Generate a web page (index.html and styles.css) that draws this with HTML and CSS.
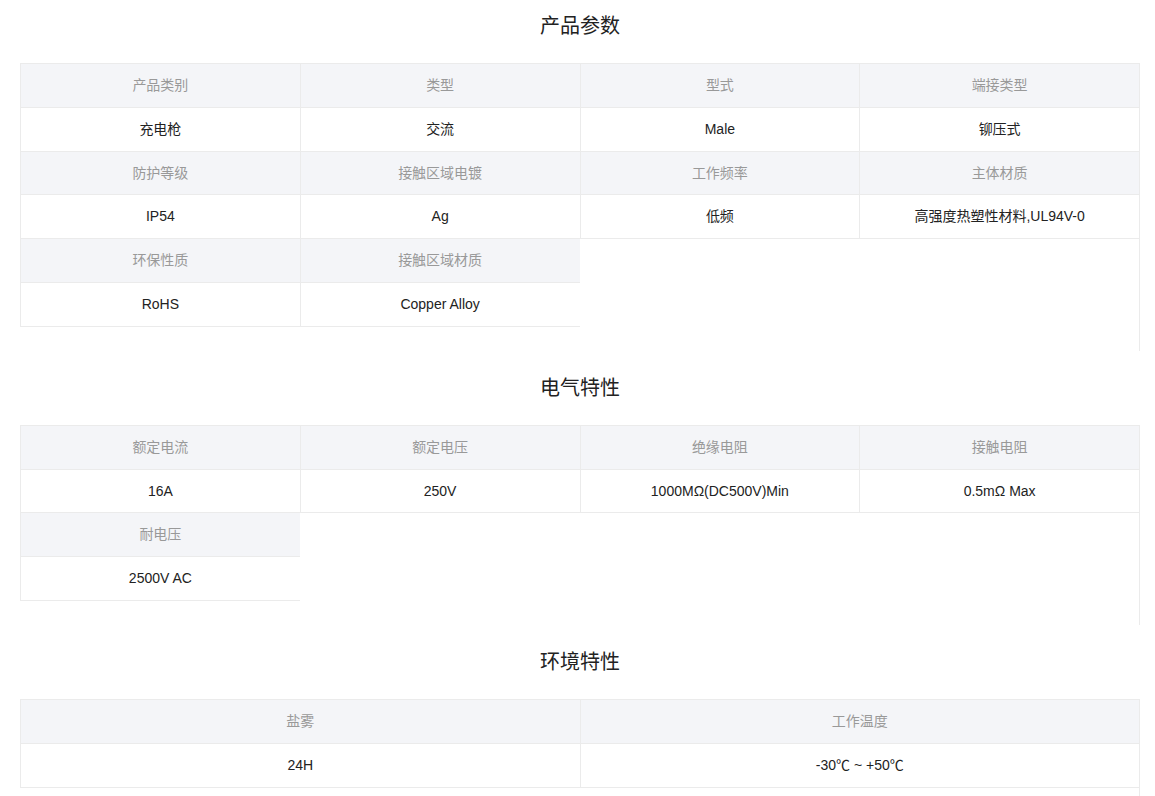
FILE: index.html
```html
<!DOCTYPE html>
<html lang="zh-CN">
<head>
<meta charset="utf-8">
<title>产品参数</title>
<link rel="stylesheet" href="styles.css">
</head>
<body>
<div class="page">
  <section class="section">
    <h2 class="title">产品参数</h2>
    <div class="grid four">
      <div class="cell"><div class="label">产品类别</div><div class="value">充电枪</div></div>
      <div class="cell"><div class="label">类型</div><div class="value">交流</div></div>
      <div class="cell"><div class="label">型式</div><div class="value">Male</div></div>
      <div class="cell"><div class="label">端接类型</div><div class="value">铆压式</div></div>
      <div class="cell"><div class="label">防护等级</div><div class="value">IP54</div></div>
      <div class="cell"><div class="label">接触区域电镀</div><div class="value">Ag</div></div>
      <div class="cell"><div class="label">工作频率</div><div class="value">低频</div></div>
      <div class="cell"><div class="label">主体材质</div><div class="value">高强度热塑性材料,UL94V-0</div></div>
      <div class="cell"><div class="label">环保性质</div><div class="value">RoHS</div></div>
      <div class="cell"><div class="label">接触区域材质</div><div class="value">Copper Alloy</div></div>
    </div>
  </section>
  <section class="section">
    <h2 class="title">电气特性</h2>
    <div class="grid four">
      <div class="cell"><div class="label">额定电流</div><div class="value">16A</div></div>
      <div class="cell"><div class="label">额定电压</div><div class="value">250V</div></div>
      <div class="cell"><div class="label">绝缘电阻</div><div class="value">1000MΩ(DC500V)Min</div></div>
      <div class="cell"><div class="label">接触电阻</div><div class="value">0.5mΩ Max</div></div>
      <div class="cell"><div class="label">耐电压</div><div class="value">2500V AC</div></div>
    </div>
  </section>
  <section class="section">
    <h2 class="title">环境特性</h2>
    <div class="grid two">
      <div class="cell"><div class="label">盐雾</div><div class="value">24H</div></div>
      <div class="cell"><div class="label">工作温度</div><div class="value">-30℃ ~ +50℃</div></div>
    </div>
  </section>
</div>
</body>
</html>
```

FILE: styles.css
```css
html, body {
  margin: 0;
  padding: 0;
  background: #ffffff;
}
body {
  font-family: "Liberation Sans", "Noto Sans CJK SC", sans-serif;
  font-size: 14px;
  color: #222222;
}
.page {
  padding: 0 15px 0 20px;
}
.section {
  margin-bottom: 11px;
}
.title {
  margin: 0 0 11px;
  height: 52px;
  line-height: 52px;
  text-align: center;
  font-size: 20px;
  font-weight: normal;
  color: #222222;
}
.grid {
  display: flex;
  flex-wrap: wrap;
  border-top: 1px solid #ebebeb;
  border-right: 1px solid #ebebeb;
  padding-bottom: 24px;
}
.grid.four .cell {
  width: 25%;
}
.grid.two .cell {
  width: 50%;
}
.cell {
  box-sizing: border-box;
  border-left: 1px solid #ebebeb;
}
.label,
.value {
  height: 42.8px;
  line-height: 43px;
  text-align: center;
  border-bottom: 1px solid #ebebeb;
  white-space: nowrap;
}
.label {
  background: #f4f5f8;
  color: #999999;
}
.value {
  background: #ffffff;
  color: #222222;
}
```
